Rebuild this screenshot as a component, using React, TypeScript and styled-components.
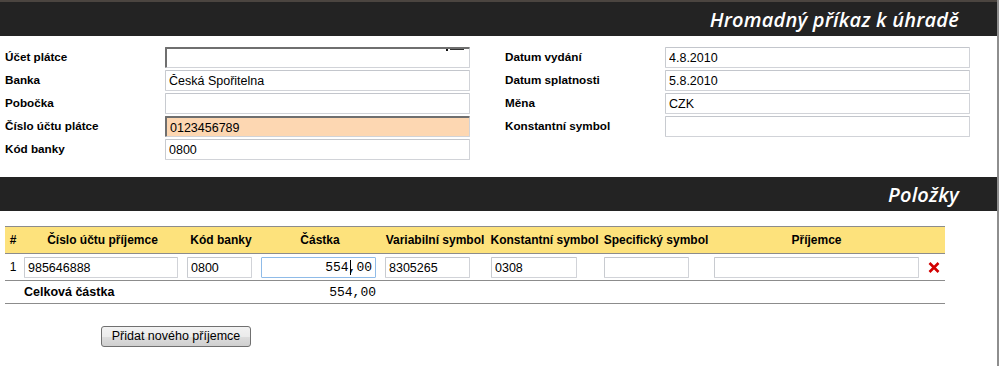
import React from 'react';
import styled, { createGlobalStyle } from 'styled-components';

const GlobalStyle = createGlobalStyle`
  html, body {
    margin: 0;
    padding: 0;
    background: #fff;
  }
  body {
    font-family: 'Liberation Sans', Arial, sans-serif;
    color: #000;
  }
`;

const Page = styled.div`
  width: 997px;
  min-height: 366px;
  border-right: 2px solid #8e8e8e;
`;

const Bar = styled.div<{ $top?: boolean }>`
  height: 34px;
  background: #232323;
  border-top: ${(p) => (p.$top ? '2px solid #4b4540' : '0')};
  display: flex;
  align-items: center;
  justify-content: flex-end;
  padding-right: 38px;
  h1,
  h2 {
    margin: 0;
    color: #fff;
    font-family: 'Open Sans', 'DejaVu Sans', sans-serif;
    font-style: italic;
    font-weight: 600;
    font-size: 20px;
    letter-spacing: 0.2px;
  }
`;

const FormSection = styled.section`
  display: grid;
  grid-template-columns: 465px 465px;
  column-gap: 35px;
  padding: 11px 0 17px 5px;
`;

const FieldColumn = styled.div`
  display: flex;
  flex-direction: column;
  gap: 2px;
`;

const Field = styled.label`
  display: grid;
  grid-template-columns: 160px 305px;
  align-items: center;
  height: 21px;
  span {
    font-size: 11.7px;
    font-weight: 700;
    margin-top: -2px;
  }
`;

const TextInput = styled.input<{ $inset?: boolean; $warn?: boolean }>`
  box-sizing: border-box;
  height: 21px;
  width: 100%;
  margin: 0;
  padding: 1px 3px 0;
  font-family: 'Liberation Sans', Arial, sans-serif;
  font-size: 12.5px;
  color: #000;
  background: ${(p) => (p.$warn ? '#fdd7b2' : '#fff')};
  border-style: solid;
  border-width: ${(p) => (p.$inset ? '2px 1px 1px 2px' : '1px')};
  border-color: ${(p) =>
    p.$inset ? '#6f6f6f #d1d3d8 #d1d3d8 #6f6f6f' : '#c3c6cc #d1d3d8 #d1d3d8 #c8cbd0'};
  border-radius: 1px;
  outline: none;
`;

const Mark = styled.span`
  position: absolute;
  right: 6px;
  top: 4px;
  width: 14px;
  height: 1px;
  background: #333;
  &::before {
    content: '';
    position: absolute;
    left: -4px;
    top: 0;
    width: 2px;
    height: 2px;
    background: #111;
  }
`;

const Caret = styled.span`
  position: absolute;
  left: 89px;
  top: 3px;
  width: 1px;
  height: 15px;
  background: #000;
`;

const InputWrap = styled.div`
  position: relative;
`;

const ItemsSection = styled.section`
  padding: 15px 0 0 5px;
`;

const Table = styled.table`
  border-collapse: collapse;
  table-layout: fixed;
  width: 940px;
  font-size: 12px;
  th {
    background: #fde27c;
    font-weight: 700;
    height: 26px;
    padding: 0;
    text-align: center;
    white-space: nowrap;
    border-top: 1px solid #8c8c8c;
    border-bottom: 1px solid #8c8c8c;
  }
  td {
    padding: 0 3px;
    border-bottom: 1px solid #8c8c8c;
    white-space: nowrap;
  }
`;

const DataRow = styled.tr`
  height: 27px;
`;

const TotalRow = styled.tr`
  height: 23px;
  td {
    font-weight: 700;
    font-size: 12.5px;
  }
`;

const Amount = styled.td`
  text-align: right;
  font-family: 'Liberation Mono', 'Courier New', monospace;
  && {
    font-size: 13px;
    font-weight: 400;
    padding-right: 6px;
  }
`;

const Index = styled.td`
  && {
    padding: 0;
    text-align: center;
    font-size: 12px;
  }
`;

const CellInput = styled(TextInput)<{ $w: number; $mono?: boolean }>`
  width: ${(p) => p.$w}px;
  display: block;
  font-family: ${(p) => (p.$mono ? "'Liberation Mono', 'Courier New', monospace" : "'Liberation Sans', Arial, sans-serif")};
  font-size: ${(p) => (p.$mono ? 13 : 12.5)}px;
  text-align: ${(p) => (p.$mono ? 'right' : 'left')};
`;

const AmountInput = styled(CellInput)`
  && {
    border: 1px solid #8fbbe8;
  }
`;

const RemoveCell = styled.td`
  && {
    padding: 0;
    text-align: center;
  }
  svg {
    display: block;
    margin: 0 auto;
  }
`;

const Actions = styled.div`
  padding: 22px 0 0 101px;
`;

const Button = styled.button`
  box-sizing: border-box;
  width: 150px;
  height: 21px;
  padding: 0 0 1px;
  font-family: 'Liberation Sans', Arial, sans-serif;
  font-size: 12.5px;
  color: #000;
  border: 1px solid #707070;
  border-radius: 3px;
  background: linear-gradient(#f2f2f2 0%, #ebebeb 50%, #dddddd 51%, #cfcfcf 100%);
`;

type FieldDef = { label: string; value: string; inset?: boolean; warn?: boolean; mark?: boolean };

const leftFields: FieldDef[] = [
  { label: 'Účet plátce', value: '', inset: true, mark: true },
  { label: 'Banka', value: 'Česká Spořitelna' },
  { label: 'Pobočka', value: '' },
  { label: 'Číslo účtu plátce', value: '0123456789', inset: true, warn: true },
  { label: 'Kód banky', value: '0800' },
];

const rightFields: FieldDef[] = [
  { label: 'Datum vydání', value: '4.8.2010' },
  { label: 'Datum splatnosti', value: '5.8.2010' },
  { label: 'Měna', value: 'CZK' },
  { label: 'Konstantní symbol', value: '' },
];

const FieldList: React.FC<{ fields: FieldDef[] }> = ({ fields }) => (
  <FieldColumn>
    {fields.map((f) => (
      <Field key={f.label}>
        <span>{f.label}</span>
        <InputWrap>
          <TextInput defaultValue={f.value} $inset={f.inset} $warn={f.warn} readOnly />
          {f.mark && <Mark />}
        </InputWrap>
      </Field>
    ))}
  </FieldColumn>
);

const columns = [16, 163, 74, 124, 106, 113, 110, 211, 23];

const App: React.FC = () => (
  <Page>
    <GlobalStyle />
    <Bar $top>
      <h1>Hromadný příkaz k úhradě</h1>
    </Bar>
    <FormSection>
      <FieldList fields={leftFields} />
      <FieldList fields={rightFields} />
    </FormSection>
    <Bar>
      <h2>Položky</h2>
    </Bar>
    <ItemsSection>
      <Table>
        <colgroup>
          {columns.map((w, i) => (
            <col key={i} style={{ width: w }} />
          ))}
        </colgroup>
        <thead>
          <tr>
            <th>#</th>
            <th>Číslo účtu příjemce</th>
            <th>Kód banky</th>
            <th>Částka</th>
            <th>Variabilní symbol</th>
            <th>Konstantní symbol</th>
            <th>Specifický symbol</th>
            <th>Příjemce</th>
            <th />
          </tr>
        </thead>
        <tbody>
          <DataRow>
            <Index>1</Index>
            <td>
              <CellInput $w={154} defaultValue="985646888" readOnly />
            </td>
            <td>
              <CellInput $w={65} defaultValue="0800" readOnly />
            </td>
            <td>
              <InputWrap>
                <AmountInput $w={115} $mono defaultValue="554,00" readOnly />
                <Caret />
              </InputWrap>
            </td>
            <td>
              <CellInput $w={85} defaultValue="8305265" readOnly />
            </td>
            <td>
              <CellInput $w={86} defaultValue="0308" readOnly />
            </td>
            <td>
              <CellInput $w={85} defaultValue="" readOnly />
            </td>
            <td>
              <CellInput $w={205} defaultValue="" readOnly />
            </td>
            <RemoveCell>
              <svg width="12" height="11" viewBox="0 0 12 11">
                <path d="M1.5 1 L10.5 10 M10.5 1 L1.5 10" stroke="#d20000" strokeWidth="2.6" />
              </svg>
            </RemoveCell>
          </DataRow>
          <TotalRow>
            <td />
            <td colSpan={2}>Celková částka</td>
            <Amount>554,00</Amount>
            <td colSpan={5} />
          </TotalRow>
        </tbody>
      </Table>
    </ItemsSection>
    <Actions>
      <Button>Přidat nového příjemce</Button>
    </Actions>
  </Page>
);

export default App;
